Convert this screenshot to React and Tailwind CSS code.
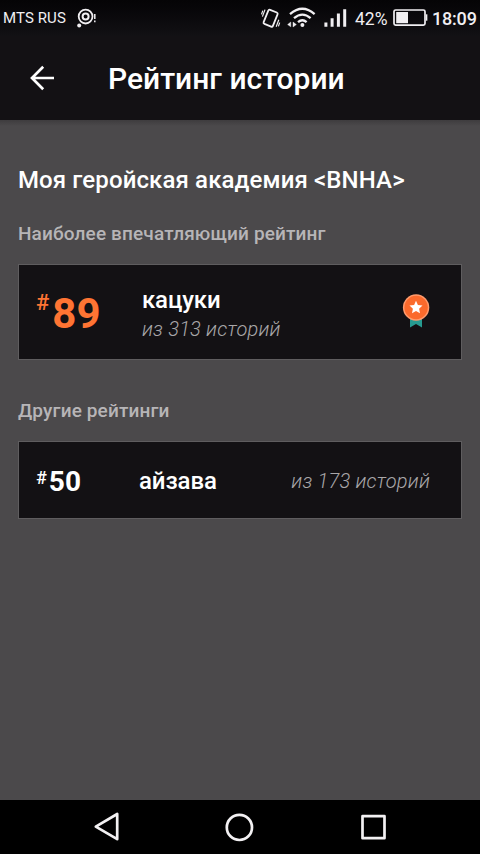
import React from "react";

function StatusBar() {
  return (
    <div className="flex h-9 items-center bg-gradient-to-b from-[#050406] to-[#121114] text-[#f1eff2]">
      <span className="ml-[3px] w-[64px] whitespace-nowrap text-[15px] leading-9 tracking-[0.1px]">MTS RUS</span>
      <svg className="ml-[9px]" width="22" height="22" viewBox="76 7 22 22" fill="none" stroke="currentColor">
        <circle cx="85.6" cy="16.6" r="6.9" strokeWidth="1.8" />
        <circle cx="85.6" cy="16.6" r="3" strokeWidth="2" />
        <circle cx="79.2" cy="25.4" r="2" fill="currentColor" stroke="none" />
        <path d="M94.8 14v5M94.8 20.6v1.6" strokeWidth="1.5" />
      </svg>
      <svg className="ml-[162px]" width="95" height="36" viewBox="260 0 95 36" fill="none" stroke="currentColor">
        <rect x="265.6" y="10.6" width="10" height="15.2" rx="1.4" transform="rotate(22 270.6 18.2)" strokeWidth="1.8" />
        <path d="M265 9.6l-2.6 7M278.8 19.8l-2.6 7M262.8 10.6l-1.3 3.8M279.7 22.6l-1.3 3.8" strokeWidth="1.2" />
        <path d="M290 14.2q12.4-10.8 24.6 0M294 18.2q8.4-7.2 16.6 0M298 22.2q4.4-3.8 8.6 0" strokeWidth="2.3" />
        <circle cx="302.4" cy="25" r="2" fill="currentColor" stroke="none" />
        <path d="M287.6 24.6l3.2-2.6v4.8zM293 22l3.4 2.6-3.4 2.4z" fill="currentColor" strokeWidth=".4" />
        <path d="M325.9 22.5v4.3M332.1 18.2v8.6M338.4 13.6v13.2M344.7 9.2v17.6" strokeWidth="3" />
      </svg>
      <span className="w-[34px] whitespace-nowrap pt-px text-[17.5px] leading-9">42%</span>
      <svg className="ml-1" width="35" height="36" viewBox="393 0 35 36" fill="none" stroke="currentColor">
        <rect x="394" y="10" width="31" height="15.2" rx="1.6" strokeWidth="1.7" />
        <rect x="396.2" y="12" width="11.8" height="11.2" fill="currentColor" stroke="none" />
        <path d="M426.6 14.3v6.4" strokeWidth="1.5" />
      </svg>
      <span className="ml-[4px] whitespace-nowrap pt-px text-[18px] font-medium leading-9 tracking-[-0.2px]">18:09</span>
    </div>
  );
}

function Medal() {
  return (
    <svg width="28" height="34" viewBox="402 294 28 34" className="-mt-[2px]">
      <path d="M410 317h12v10.5l-6-3.4-6 3.4z" fill="#279b91" />
      <circle cx="416.1" cy="307.5" r="13.2" fill="#ff9b6d" />
      <circle cx="416.1" cy="307.5" r="11.7" fill="#fb6a2c" />
      <path d="M416 300.8l1.9 4.3 4.6.5-3.4 3.1.9 4.6-4-2.3-4 2.3.9-4.6-3.4-3.1 4.6-.5z" fill="#fff" />
    </svg>
  );
}

export default function App() {
  return (
    <div className="flex h-[854px] w-[480px] flex-col overflow-hidden bg-[#4b494b] font-['Roboto',sans-serif] text-white">
      <StatusBar />
      <header className="flex h-[84px] shrink-0 items-center bg-[#131114]">
        <svg className="ml-[29px]" width="26" height="26" viewBox="29 65 26 26" fill="none" stroke="#fff" strokeWidth="2.7">
          <path d="M54 78H32M43.2 66.8L32 78l11.2 11.2" />
        </svg>
        <h1 className="ml-[53px] whitespace-nowrap pt-[2px] text-[30px] font-medium leading-[84px]">Рейтинг истории</h1>
      </header>
      <div className="h-[6px] shrink-0 bg-gradient-to-b from-[#3e3c3e] to-[#4b494b]" />
      <main className="flex flex-1 flex-col px-[18px]">
        <h2 className="mt-[38px] whitespace-nowrap text-[24px] font-medium leading-8 tracking-[0.12px]">Моя геройская академия &lt;BNHA&gt;</h2>
        <h3 className="mt-[26px] whitespace-nowrap text-[19px] font-medium leading-6 tracking-[0.14px] text-[#b7b5b7]">Наиболее впечатляющий рейтинг</h3>
        <section className="mt-[18px] flex h-24 items-center border border-[#5f5d5f] bg-[#131114]">
          <div className="ml-[17px] flex w-[106px] items-start pt-[3px] text-[#ff7433]">
            <span className="mt-px text-[22px] font-medium leading-[26px]">#</span>
            <span className="ml-[3px] text-[42px] font-bold leading-[50px]">89</span>
          </div>
          <div className="flex-1">
            <div className="text-[24px] font-medium leading-8 tracking-[-0.15px]">кацуки</div>
            <div className="pt-px text-[20px] font-light italic leading-6 tracking-[0.2px] text-[#a9a7a9]">из 313 историй</div>
          </div>
          <div className="mr-[31px]"><Medal /></div>
        </section>
        <h3 className="mt-[39px] whitespace-nowrap text-[19px] font-medium leading-6 tracking-[0.14px] text-[#b7b5b7]">Другие рейтинги</h3>
        <section className="mt-[18px] flex h-[78px] items-center border border-[#5f5d5f] bg-[#131114]">
          <div className="ml-[17px] flex w-[103px] items-start pt-[3px]">
            <span className="text-[18px] font-medium leading-[24px]">#</span>
            <span className="ml-[2px] text-[28px] font-bold leading-8">50</span>
          </div>
          <div className="flex-1 pt-[2px] text-[24px] font-medium leading-8 tracking-[-0.1px]">айзава</div>
          <div className="mr-[31px] pt-[2px] text-[20px] font-light italic leading-6 tracking-[0.2px] text-[#a9a7a9]">из 173 историй</div>
        </section>
      </main>
      <nav className="flex h-[54px] shrink-0 items-center justify-between bg-black pl-[93px] pr-[93px]">
        <svg width="28" height="30" viewBox="93 813 28 30" fill="none" stroke="#f3f1f3" strokeWidth="2.7" strokeLinejoin="round">
          <path d="M117.2 815v25.2L95.8 827.6z" />
        </svg>
        <svg width="30" height="30" viewBox="0.6 0 30 30" fill="none" stroke="#f3f1f3" strokeWidth="2.7">
          <circle cx="15" cy="15.4" r="12.6" />
        </svg>
        <svg width="28" height="28" viewBox="-0.5 0 28 28" fill="none" stroke="#f3f1f3" strokeWidth="2.7" strokeLinejoin="round">
          <rect x="3" y="3.2" width="22" height="22" />
        </svg>
      </nav>
    </div>
  );
}
